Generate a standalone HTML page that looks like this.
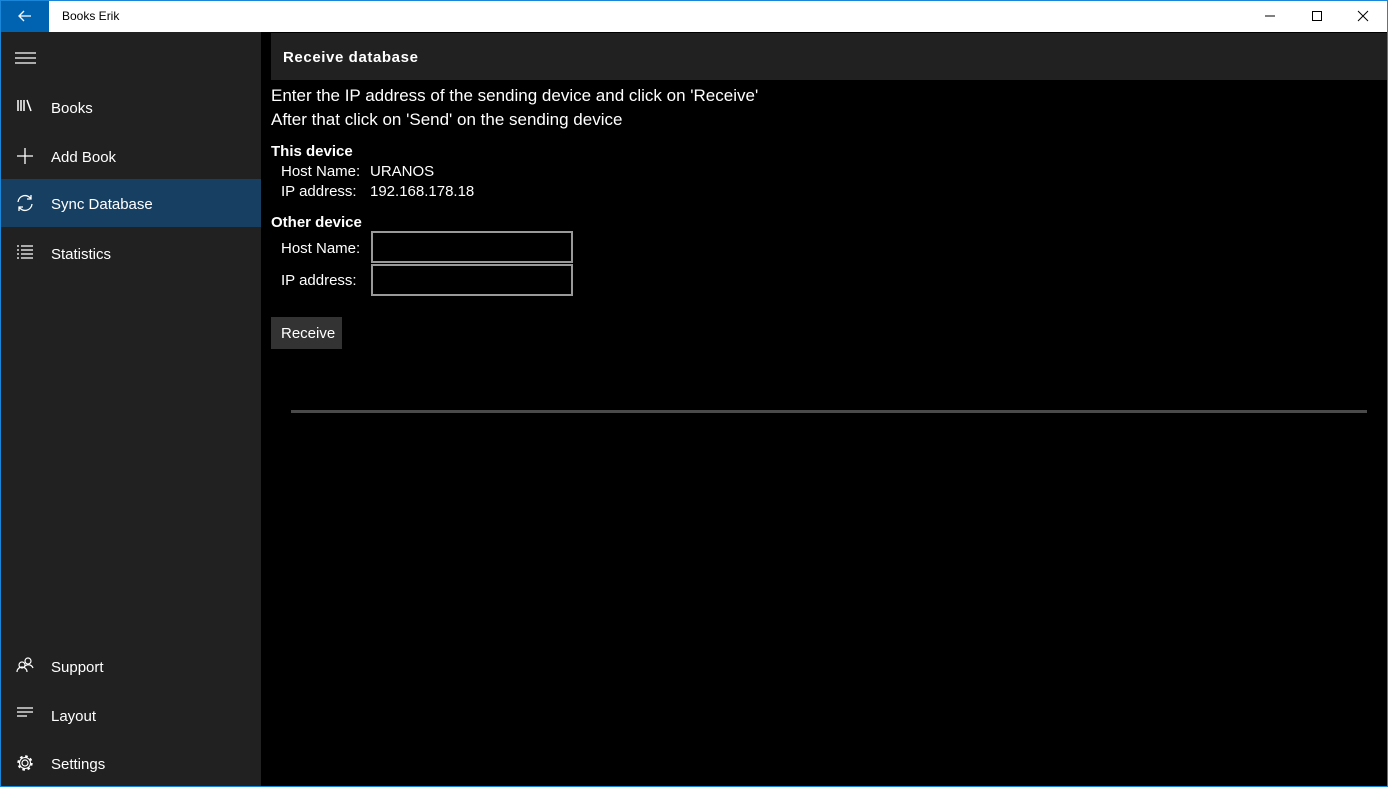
<!DOCTYPE html>
<html><head><style>
*{margin:0;padding:0;box-sizing:border-box}
body{width:1388px;height:787px;background:#000;font-family:"Liberation Sans",sans-serif;color:#fff;position:relative;overflow:hidden}
.frame{position:absolute;inset:0;border:1px solid #1a86d9;pointer-events:none;z-index:10}
.title{position:absolute;left:0;top:0;width:1388px;height:32px;background:#fff;color:#000}
.back{position:absolute;left:0;top:0;width:49px;height:32px;background:#0063b1}
.title .t{position:absolute;left:62px;top:9px;font-size:12px}
.side{position:absolute;left:0;top:32px;width:261px;height:755px;background:#212121}
.item{position:absolute;left:0;width:261px;height:48px;font-size:15px}
.item span{position:absolute;left:51px;top:17px}
.item svg{position:absolute;left:16px;top:15px}
.sel{background:#173f62}
.abs{position:absolute;font-size:15px;white-space:nowrap}
.box{position:absolute;left:371px;width:202px;height:32px;border:2px solid #999;background:#000}
</style></head><body>
<div class="title">
 <div class="back"><svg width="49" height="32"><path d="M19 16h12M24 11l-5 5 5 5" stroke="#fff" stroke-width="1.3" fill="none"/></svg></div>
 <div class="t">Books Erik</div>
 <svg style="position:absolute;left:1260px;top:8px" width="120" height="16">
  <path d="M5 8h10" stroke="#000"/>
  <rect x="52.5" y="3.5" width="9" height="9" stroke="#000" fill="none"/>
  <path d="M98 3l10 10M108 3l-10 10" stroke="#000"/>
 </svg>
</div>
<div class="side">
 <svg style="position:absolute;left:15px;top:20px" width="22" height="12"><path d="M0 1h21M0 6h21M0 11h21" stroke="#fff" stroke-width="1.2"/></svg>
 <div class="item" style="top:51px"><svg width="18" height="16"><path d="M2 2v11M5 2v11M8 2v11M11 2l4 11" stroke="#fff" stroke-width="1.5" fill="none"/></svg><span>Books</span></div>
 <div class="item" style="top:100px"><svg width="18" height="18"><path d="M9 1v16M1 9h16" stroke="#fff" stroke-width="1.3"/></svg><span>Add Book</span></div>
 <div class="item sel" style="top:147px;height:48px"><svg width="18" height="18"><path d="M2 8a7 7 0 0 1 13-3M16 10a7 7 0 0 1-13 3M15 1v4h-4M3 17v-4h4" stroke="#fff" stroke-width="1.3" fill="none"/></svg><span>Sync Database</span></div>
 <div class="item" style="top:197px"><svg width="18" height="16"><path d="M1 2h2M5 2h12M1 6h2M5 6h12M1 10h2M5 10h12M1 14h2M5 14h12" stroke="#fff" stroke-width="1.2"/></svg><span>Statistics</span></div>
 <div class="item" style="top:610px"><svg width="18" height="18"><circle cx="6" cy="8" r="3" stroke="#fff" fill="none" stroke-width="1.2"/><circle cx="12" cy="4" r="3" stroke="#fff" fill="none" stroke-width="1.2"/><path d="M1 15a5 5 0 0 1 10 0M9 9a5 5 0 0 1 8 2" stroke="#fff" fill="none" stroke-width="1.2"/></svg><span>Support</span></div>
 <div class="item" style="top:659px"><svg width="18" height="16"><path d="M1 2h16M1 6h16M1 10h10" stroke="#fff" stroke-width="1.2"/></svg><span>Layout</span></div>
 <div class="item" style="top:707px"><svg width="18" height="18"><circle cx="9" cy="9" r="3" stroke="#fff" fill="none" stroke-width="1.2"/><circle cx="9" cy="9" r="6.5" stroke="#fff" fill="none" stroke-width="2.4" stroke-dasharray="2.5 2.6"/><circle cx="9" cy="9" r="5.5" stroke="#fff" fill="none" stroke-width="1.1"/></svg><span>Settings</span></div>
</div>
<div style="position:absolute;left:271px;top:33px;width:1117px;height:47px;background:#212121"></div>
<div class="abs" style="left:283px;top:49px;font-weight:bold;letter-spacing:0.6px">Receive database</div>
<div class="abs" style="left:271px;top:86px;font-size:17px">Enter the IP address of the sending device and click on 'Receive'</div>
<div class="abs" style="left:271px;top:110px;font-size:17px">After that click on 'Send' on the sending device</div>
<div class="abs" style="left:271px;top:143px;font-weight:bold">This device</div>
<div class="abs" style="left:281px;top:163px">Host Name:</div>
<div class="abs" style="left:370px;top:163px">URANOS</div>
<div class="abs" style="left:281px;top:183px">IP address:</div>
<div class="abs" style="left:370px;top:183px">192.168.178.18</div>
<div class="abs" style="left:271px;top:214px;font-weight:bold">Other device</div>
<div class="abs" style="left:281px;top:240px">Host Name:</div>
<div class="abs" style="left:281px;top:272px">IP address:</div>
<div class="box" style="top:231px"></div>
<div class="box" style="top:264px"></div>
<div style="position:absolute;left:271px;top:317px;width:71px;height:32px;background:#333"></div>
<div class="abs" style="left:281px;top:325px">Receive</div>
<div style="position:absolute;left:291px;top:410px;width:1076px;height:3px;background:#4a4a4a"></div>
<div class="frame"></div>
</body></html>
